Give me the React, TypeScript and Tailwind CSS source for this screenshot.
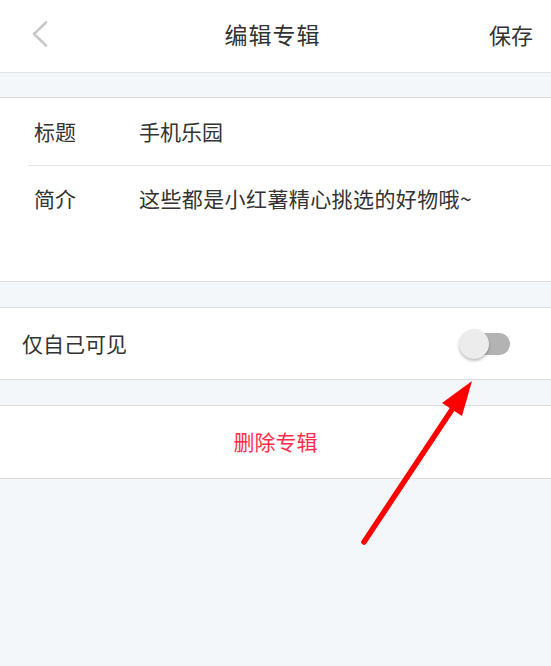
const font = { fontFamily: '"Noto Sans CJK SC", "Noto Sans", sans-serif' };

function Gap({ h }: { h: string }) {
  return <div className={`${h} border-b border-[#dcdcdc] bg-[#f4f7fa]`} />;
}

export default function App() {
  return (
    <div
      className="relative h-[666px] w-[551px] overflow-hidden bg-[#f4f7fa] text-[#333]"
      style={font}
    >
      {/* Header */}
      <div className="flex h-[73px] items-center justify-between border-b border-[#e2e2e2] bg-white pr-[18px] pb-[4px] pl-[30px]">
        <svg width="20" height="30" viewBox="0 0 20 30">
          <path
            d="M16 3.5 L4 15 L16 26.5"
            fill="none"
            stroke="#c9c9c9"
            strokeWidth="2.6"
            strokeLinecap="round"
            strokeLinejoin="round"
          />
        </svg>
        <span className="ml-[6px] text-[23px] tracking-[1px] text-[#333]">编辑专辑</span>
        <span className="text-[22px] text-[#333]">保存</span>
      </div>

      <Gap h="h-[25px]" />

      {/* Title / description */}
      <div className="border-b border-[#dcdcdc] bg-white">
        <div className="ml-[28px] flex h-[68px] items-center border-b border-[#e6e6e6] pl-[6px] text-[21px]">
          <span className="w-[105px]">标题</span>
          <span>手机乐园</span>
        </div>
        <div className="flex h-[115px] items-start pt-[17px] pl-[34px] text-[21px]">
          <span className="w-[105px]">简介</span>
          <span className="tracking-[0.4px]">这些都是小红薯精心挑选的好物哦~</span>
        </div>
      </div>

      <Gap h="h-[26px]" />

      {/* Private toggle */}
      <div className="flex h-[72px] items-center justify-between border-b border-[#dcdcdc] bg-white pr-[41px] pl-[22px]">
        <span className="text-[21px]">仅自己可见</span>
        <div className="relative h-[22px] w-[48px] rounded-full bg-[#b3b3b3]">
          <div className="absolute top-1/2 left-[-3px] h-[30px] w-[30px] -translate-y-1/2 rounded-full bg-[#ececec] shadow-[0_2px_3px_rgba(0,0,0,0.25)]" />
        </div>
      </div>

      <Gap h="h-[26px]" />

      {/* Delete */}
      <div className="flex h-[73px] items-center justify-center border-b border-[#dcdcdc] bg-white text-[21px] text-[#ff2d4b]">
        删除专辑
      </div>

      {/* Annotation arrow */}
      <svg
        className="pointer-events-none absolute inset-0"
        width="551"
        height="666"
        viewBox="0 0 551 666"
      >
        <line
          x1="364"
          y1="542"
          x2="455"
          y2="405"
          stroke="#ff0000"
          strokeWidth="5.5"
          strokeLinecap="round"
        />
        <polygon points="472,381 442,403 462,416" fill="#ff0000" />
      </svg>
    </div>
  );
}
